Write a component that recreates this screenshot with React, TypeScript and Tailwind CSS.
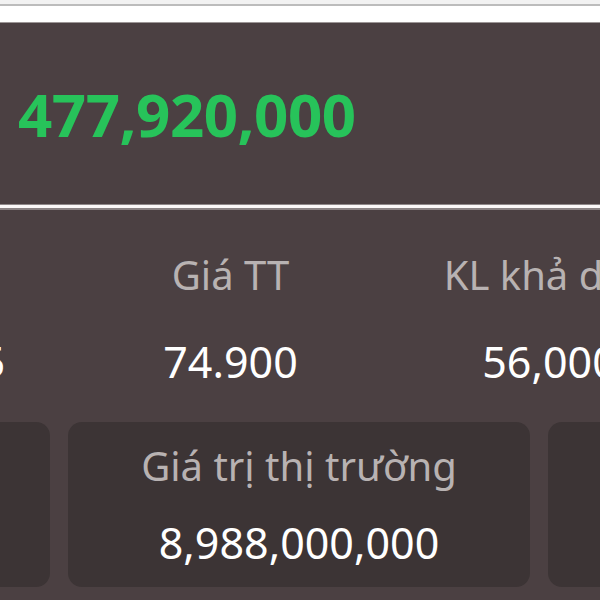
import React from "react";

const font = { fontFamily: '"Noto Sans", "Open Sans", sans-serif' };

export default function App() {
  return (
    <div className="w-[600px] h-[600px] overflow-hidden bg-[#4b4042] flex flex-col" style={font}>
      {/* top strip */}
      <div className="h-[4px] bg-[#f2f2f2] shrink-0" />
      <div className="h-[2px] bg-[#bcbcbc] shrink-0" />
      <div className="h-[16px] bg-white shrink-0" />
      <div className="h-[1px] bg-[#9c9696] shrink-0" />

      {/* balance panel */}
      <div className="h-[181px] shrink-0 bg-[#4b4042] flex items-center pl-[18px]">
        <span className="text-[60px] leading-none font-bold text-[#27c35a] tracking-[-0.5px]">477,920,000</span>
      </div>

      {/* divider */}
      <div className="h-[1px] bg-[#8f8889] shrink-0" />
      <div className="h-[3px] bg-[#fbf8f8] shrink-0" />
      <div className="h-[2px] bg-[#8a8283] shrink-0" />

      {/* details */}
      <div className="flex-1 bg-[#4b4042] pt-[45px]">
        <div className="flex -ml-[193px]">
          <div className="w-[262px] shrink-0 flex flex-col items-center">
            <span className="text-[40px] leading-none text-[#b8b2b2] whitespace-nowrap">Giá TB</span>
            <span className="mt-[45px] text-[43px] leading-none text-white whitespace-nowrap">79.635</span>
          </div>
          <div className="w-[323px] shrink-0 flex flex-col items-center">
            <span className="text-[40px] leading-none text-[#b8b2b2] whitespace-nowrap">Giá TT</span>
            <span className="mt-[45px] text-[43px] leading-none text-white whitespace-nowrap">74.900</span>
          </div>
          <div className="w-[323px] shrink-0 flex flex-col items-center">
            <span className="text-[40px] leading-none text-[#b8b2b2] whitespace-nowrap pl-[14px]">KL khả dụng</span>
            <span className="mt-[45px] text-[43px] leading-none text-white whitespace-nowrap pr-[8px]">56,000</span>
          </div>
        </div>

        <div className="flex gap-[18px] -ml-[412px] mt-[39px]">
          <div className="w-[462px] h-[165px] shrink-0 rounded-[14px] bg-[#3c3435]" />
          <div className="w-[462px] h-[165px] shrink-0 rounded-[14px] bg-[#3c3435] flex flex-col items-center pt-[24px]">
            <span className="text-[40px] leading-none text-[#b8b2b2] whitespace-nowrap">Giá trị thị trường</span>
            <span className="mt-[35px] text-[43px] leading-none text-white whitespace-nowrap">8,988,000,000</span>
          </div>
          <div className="w-[462px] h-[165px] shrink-0 rounded-[14px] bg-[#3c3435]" />
        </div>
      </div>
    </div>
  );
}
